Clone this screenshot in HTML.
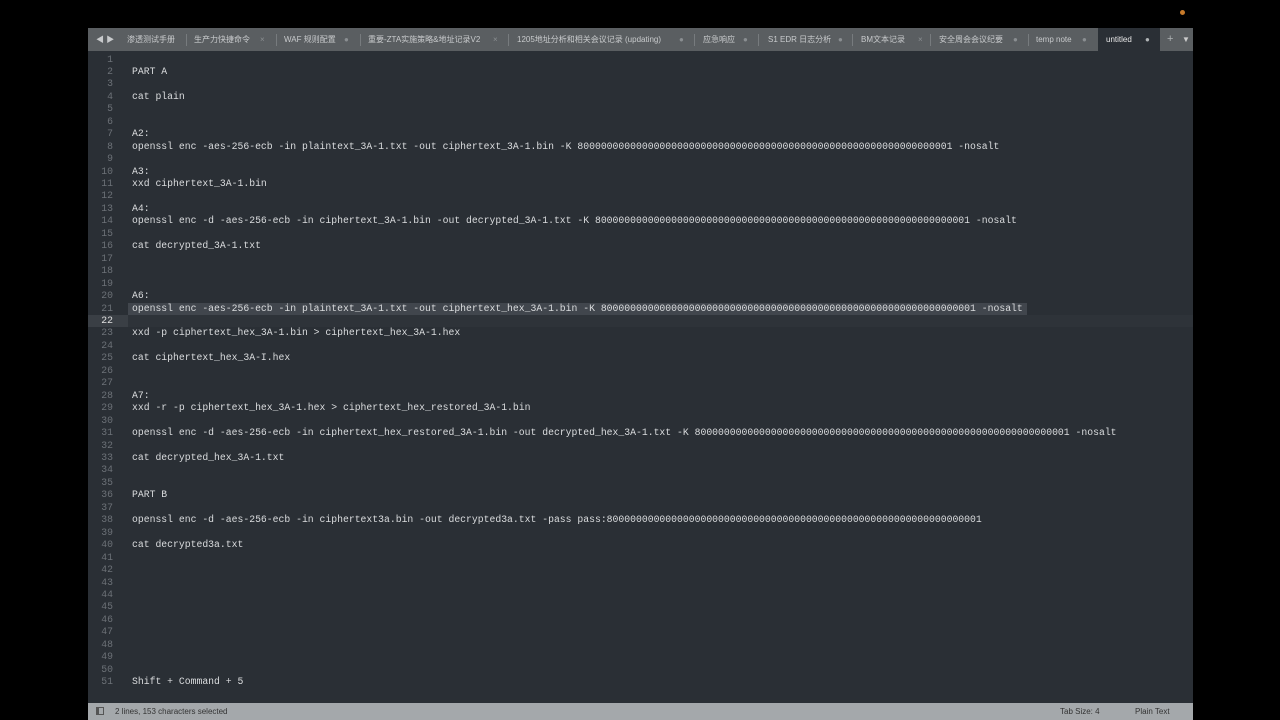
<!DOCTYPE html>
<html><head><meta charset="utf-8"><style>
html,body{margin:0;padding:0;background:#000;width:1280px;height:720px;overflow:hidden;}
.win{position:absolute;left:88px;top:28px;width:1105px;height:692px;background:#2a2f35;}
.tabs{position:absolute;left:0;top:0;width:1105px;height:23px;background:#5a5e61;font-family:"Liberation Sans","Noto Sans CJK SC",sans-serif;font-size:8px;color:#c8cacc;}
.tab{position:absolute;top:0;height:23px;line-height:23px;white-space:nowrap;}
.sep{position:absolute;top:6px;width:1px;height:12px;background:#777b7e;}
.x{position:absolute;top:0;line-height:23px;color:#8a8e91;font-size:8px;}
.active{position:absolute;left:1010px;top:0;width:62px;height:23px;background:#2a2f35;}
.ed{position:absolute;left:0;top:25.5px;width:1105px;font-family:"Liberation Mono",monospace;font-size:9.77px;line-height:12.46px;color:#dadcde;}
.ln{position:relative;height:12.46px;white-space:pre;}
.num{position:absolute;left:0;width:25px;text-align:right;color:#6c7177;}
.txt{position:absolute;left:44px;}
.sel{position:absolute;left:40px;top:0;width:899px;height:12.46px;background:#41464d;}
.status{position:absolute;left:0;top:675px;width:1105px;height:17px;background:#a4a8ab;font-family:"Liberation Sans",sans-serif;font-size:8px;color:#333;line-height:17px;}
</style></head><body>
<div style="position:absolute;left:1180px;top:10px;width:5px;height:5px;border-radius:50%;background:#c77a2a"></div>
<div class="win">
<div class="tabs">
<div class="tab" style="left:8px;color:#c8cacc;font-size:8px">◀ ▶</div>
<div class="tab" style="left:39px">渗透测试手册</div><div class="sep" style="left:98px"></div>
<div class="tab" style="left:106px">生产力快捷命令</div><div class="x" style="left:172px">×</div><div class="sep" style="left:188px"></div>
<div class="tab" style="left:196px">WAF 规则配置</div><div class="x" style="left:256px">●</div><div class="sep" style="left:272px"></div>
<div class="tab" style="left:280px">重要-ZTA实施策略&amp;地址记录V2</div><div class="x" style="left:405px">×</div><div class="sep" style="left:420px"></div>
<div class="tab" style="left:429px">1205地址分析和相关会议记录 (updating)</div><div class="x" style="left:591px">●</div><div class="sep" style="left:606px"></div>
<div class="tab" style="left:615px">应急响应</div><div class="x" style="left:655px">●</div><div class="sep" style="left:670px"></div>
<div class="tab" style="left:680px">S1 EDR 日志分析</div><div class="x" style="left:750px">●</div><div class="sep" style="left:764px"></div>
<div class="tab" style="left:773px">BM文本记录</div><div class="x" style="left:830px">×</div><div class="sep" style="left:842px"></div>
<div class="tab" style="left:851px">安全周会会议纪要</div><div class="x" style="left:925px">●</div><div class="sep" style="left:940px"></div>
<div class="tab" style="left:948px">temp note</div><div class="x" style="left:994px">●</div>
<div class="active"></div>
<div class="tab" style="left:1018px;color:#e8e8e8">untitled</div><div class="x" style="left:1057px;color:#b0b4b6">●</div>
<div class="tab" style="left:1079px;color:#aeb2b4;font-size:11px">+</div>
<div class="tab" style="left:1094px;color:#ccc;font-size:8px">▼</div>
</div>
<div class="ed">
<div class="ln"><span class="num">1</span></div>
<div class="ln"><span class="num">2</span><span class="txt">PART A</span></div>
<div class="ln"><span class="num">3</span></div>
<div class="ln"><span class="num">4</span><span class="txt">cat plain</span></div>
<div class="ln"><span class="num">5</span></div>
<div class="ln"><span class="num">6</span></div>
<div class="ln"><span class="num">7</span><span class="txt">A2:</span></div>
<div class="ln"><span class="num">8</span><span class="txt">openssl enc -aes-256-ecb -in plaintext_3A-1.txt -out ciphertext_3A-1.bin -K 8000000000000000000000000000000000000000000000000000000000000001 -nosalt</span></div>
<div class="ln"><span class="num">9</span></div>
<div class="ln"><span class="num">10</span><span class="txt">A3:</span></div>
<div class="ln"><span class="num">11</span><span class="txt">xxd ciphertext_3A-1.bin</span></div>
<div class="ln"><span class="num">12</span></div>
<div class="ln"><span class="num">13</span><span class="txt">A4:</span></div>
<div class="ln"><span class="num">14</span><span class="txt">openssl enc -d -aes-256-ecb -in ciphertext_3A-1.bin -out decrypted_3A-1.txt -K 8000000000000000000000000000000000000000000000000000000000000001 -nosalt</span></div>
<div class="ln"><span class="num">15</span></div>
<div class="ln"><span class="num">16</span><span class="txt">cat decrypted_3A-1.txt</span></div>
<div class="ln"><span class="num">17</span></div>
<div class="ln"><span class="num">18</span></div>
<div class="ln"><span class="num">19</span></div>
<div class="ln"><span class="num">20</span><span class="txt">A6:</span></div>
<div class="ln"><span class="sel"></span><span class="num">21</span><span class="txt">openssl enc -aes-256-ecb -in plaintext_3A-1.txt -out ciphertext_hex_3A-1.bin -K 8000000000000000000000000000000000000000000000000000000000000001 -nosalt</span></div>
<div class="ln" style="background:#2e3339"><span style="position:absolute;left:0;top:0;width:40px;height:12.46px;background:#3a3f45"></span><span class="num" style="color:#e0e0e0">22</span></div>
<div class="ln"><span class="num">23</span><span class="txt">xxd -p ciphertext_hex_3A-1.bin &gt; ciphertext_hex_3A-1.hex</span></div>
<div class="ln"><span class="num">24</span></div>
<div class="ln"><span class="num">25</span><span class="txt">cat ciphertext_hex_3A-I.hex</span></div>
<div class="ln"><span class="num">26</span></div>
<div class="ln"><span class="num">27</span></div>
<div class="ln"><span class="num">28</span><span class="txt">A7:</span></div>
<div class="ln"><span class="num">29</span><span class="txt">xxd -r -p ciphertext_hex_3A-1.hex &gt; ciphertext_hex_restored_3A-1.bin</span></div>
<div class="ln"><span class="num">30</span></div>
<div class="ln"><span class="num">31</span><span class="txt">openssl enc -d -aes-256-ecb -in ciphertext_hex_restored_3A-1.bin -out decrypted_hex_3A-1.txt -K 8000000000000000000000000000000000000000000000000000000000000001 -nosalt</span></div>
<div class="ln"><span class="num">32</span></div>
<div class="ln"><span class="num">33</span><span class="txt">cat decrypted_hex_3A-1.txt</span></div>
<div class="ln"><span class="num">34</span></div>
<div class="ln"><span class="num">35</span></div>
<div class="ln"><span class="num">36</span><span class="txt">PART B</span></div>
<div class="ln"><span class="num">37</span></div>
<div class="ln"><span class="num">38</span><span class="txt">openssl enc -d -aes-256-ecb -in ciphertext3a.bin -out decrypted3a.txt -pass pass:8000000000000000000000000000000000000000000000000000000000000001</span></div>
<div class="ln"><span class="num">39</span></div>
<div class="ln"><span class="num">40</span><span class="txt">cat decrypted3a.txt</span></div>
<div class="ln"><span class="num">41</span></div>
<div class="ln"><span class="num">42</span></div>
<div class="ln"><span class="num">43</span></div>
<div class="ln"><span class="num">44</span></div>
<div class="ln"><span class="num">45</span></div>
<div class="ln"><span class="num">46</span></div>
<div class="ln"><span class="num">47</span></div>
<div class="ln"><span class="num">48</span></div>
<div class="ln"><span class="num">49</span></div>
<div class="ln"><span class="num">50</span></div>
<div class="ln"><span class="num">51</span><span class="txt">Shift + Command + 5</span></div>
</div>
<div class="status">
<span style="position:absolute;left:8px;top:4px;width:8px;height:8px;border:1px solid #555;box-sizing:border-box;border-left-width:3px"></span>
<span style="position:absolute;left:27px">2 lines, 153 characters selected</span>
<span style="position:absolute;left:972px">Tab Size: 4</span>
<span style="position:absolute;left:1047px">Plain Text</span>
</div>
</div>
</body></html>
